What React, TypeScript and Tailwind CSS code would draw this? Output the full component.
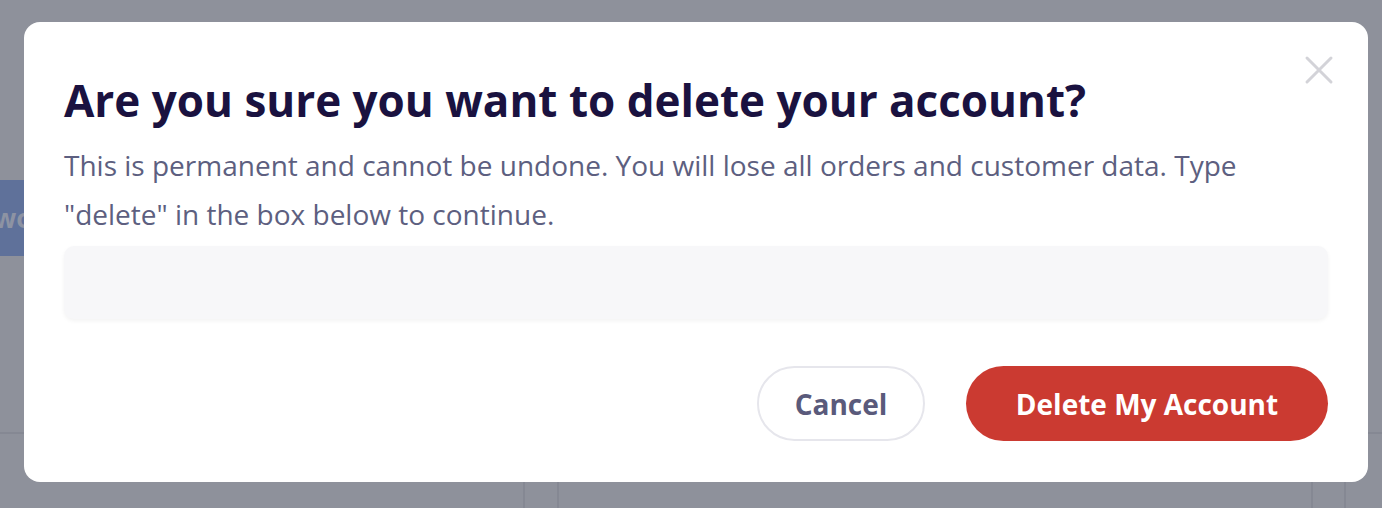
import { useState } from 'react';

function CloseIcon() {
  return (
    <svg width="30" height="30" viewBox="0 0 30 30" fill="none" stroke="#d3d3d8" strokeWidth="3" strokeLinecap="round">
      <path d="M3 3L27 27M27 3L3 27" />
    </svg>
  );
}

export default function App() {
  const [value, setValue] = useState('');

  return (
    <div className="relative h-[508px] w-full overflow-hidden bg-[#8e919b] font-['Open_Sans',sans-serif]">
      {/* dimmed page behind the dialog */}
      <div className="flex h-full flex-col">
        <div className="h-[180px]" />
        <div className="flex h-[76px] w-[24px] items-center overflow-hidden bg-[#5f719a]">
          <span className="ml-[-6px] text-[26px] font-bold text-[#8d93a3]">wo</span>
        </div>
        <div className="h-[176px]" />
        <div className="flex flex-1 border-t-2 border-[#858893]">
          <div className="w-[523px]" />
          <div className="w-[34px] border-l-2 border-[#858893]" />
          <div className="w-[754px] border-l-2 border-[#858893]" />
          <div className="w-[33px] border-l-2 border-[#858893]" />
          <div className="flex-1 border-l-2 border-[#858893]" />
        </div>
      </div>

      {/* dialog */}
      <div className="absolute left-[24px] top-[22px] flex h-[460px] w-[1344px] flex-col rounded-2xl bg-white px-10 pt-[52px] pb-[41px]">
        <button className="absolute right-[34px] top-[33px]">
          <CloseIcon />
        </button>
        <h1 className="text-[44px] font-bold leading-[52px] text-[#1a1240]">
          Are you sure you want to delete your account?
        </h1>
        <p className="mt-[15px] text-[28px] leading-[49px] text-[#5d5f80]">
          This is permanent and cannot be undone. You will lose all orders and customer data. Type "delete" in the box below to continue.
        </p>
        <input
          value={value}
          onChange={(e) => setValue(e.target.value)}
          className="mt-[7px] h-[73px] w-full rounded-[10px] bg-[#f7f7f9] px-5 text-[24px] shadow-[0_2px_4px_rgba(0,0,0,0.05)] outline-none"
        />
        <div className="mt-auto flex justify-end gap-[41px]">
          <button className="h-[75px] w-[168px] rounded-full border-2 border-[#e6e6ec] text-[28px] font-bold text-[#5a5a7b]">
            Cancel
          </button>
          <button className="h-[75px] w-[362px] rounded-full bg-[#cb3a31] text-[28px] font-bold text-white">
            Delete My Account
          </button>
        </div>
      </div>
    </div>
  );
}
